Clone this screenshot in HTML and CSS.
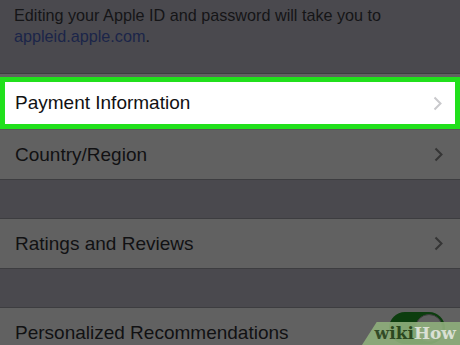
FILE: index.html
```html
<!DOCTYPE html>
<html lang="en">
 <head>
  <title>Apple ID</title>
  <link rel="stylesheet" href="styles.css">
 </head>
 <body>
  <div class="note">
   Editing your Apple ID and password will take you to
   <span class="link">appleid.apple.com</span>.
  </div>
  <div class="group">
   <div class="row active">
    <span class="label">Payment Information</span>
    <svg class="chev" width="9" height="15" viewBox="0 0 9 15"><path d="M1.5 1.5 L7.5 7.5 L1.5 13.5" fill="none" stroke="currentColor" stroke-width="2"/></svg>
   </div>
   <div class="row">
    <span class="label">Country/Region</span>
    <svg class="chev" width="9" height="15" viewBox="0 0 9 15"><path d="M1.5 1.5 L7.5 7.5 L1.5 13.5" fill="none" stroke="currentColor" stroke-width="2"/></svg>
   </div>
  </div>
  <div class="gap"></div>
  <div class="group">
   <div class="row">
    <span class="label">Ratings and Reviews</span>
    <svg class="chev" width="9" height="15" viewBox="0 0 9 15"><path d="M1.5 1.5 L7.5 7.5 L1.5 13.5" fill="none" stroke="currentColor" stroke-width="2"/></svg>
   </div>
  </div>
  <div class="gap"></div>
  <div class="group">
   <div class="row">
    <span class="label">Personalized Recommendations</span>
    <span class="toggle"><span class="knob"></span></span>
   </div>
  </div>
  <div class="wm"><span class="wiki">wiki</span><span class="how">How</span></div>
 </body>
</html>
```

FILE: styles.css
```css
body {
    margin: 0;
    background: #4a494e;
    font-family: "Liberation Sans", Arial, sans-serif;
    color: #111113;
    overflow: hidden;
    height: 345px;
    position: relative;
}

.note {
    padding: 5px 14px 0 14px;
    height: 73px;
    font-size: 16.2px;
    line-height: 21px;
    color: #151517;
    box-sizing: border-box;
}

.link {
    color: #1b2549;
}

.group {
    background: #616161;
    border-top: 1px solid #3d3d40;
    border-bottom: 1px solid #3d3d40;
}

.row {
    height: 49px;
    display: flex;
    align-items: center;
    justify-content: space-between;
    padding: 0 17px 0 15px;
    font-size: 19px;
}

.row + .row {
    border-top: 1px solid #555;
}

.row.active {
    background: #fff;
    border: 5px solid #21e01c;
    height: 42px;
    padding: 0 13px 0 10px;
    margin-top: 3px;
}

.chev {
    color: #353535;
}

.active .chev {
    color: #c9c9cc;
}

.gap {
    height: 38px;
}

.toggle {
    width: 56px;
    height: 32px;
    border-radius: 16px;
    background: #0c3d0e;
    position: relative;
    margin-right: -2px;
    margin-top: -10px;
}

.knob {
    position: absolute;
    right: 2px;
    top: 2px;
    width: 28px;
    height: 28px;
    border-radius: 50%;
    background: #5e5e5e;
    border: 1px solid #3c3c3c;
    box-sizing: border-box;
}

.wm {
    position: absolute;
    right: 0;
    bottom: 0;
    width: 98px;
    height: 23px;
    background: #8fb07d;
    clip-path: polygon(15% 0, 100% 0, 100% 100%, 0 100%);
    font-family: "DejaVu Serif", "Liberation Serif", serif;
    font-weight: bold;
    font-size: 17px;
    line-height: 23px;
    text-align: right;
    padding-right: 4px;
    box-sizing: border-box;
    opacity: 0.9;
}

.wiki {
    color: #2f4a22;
}

.how {
    color: #e8efe2;
}
```
